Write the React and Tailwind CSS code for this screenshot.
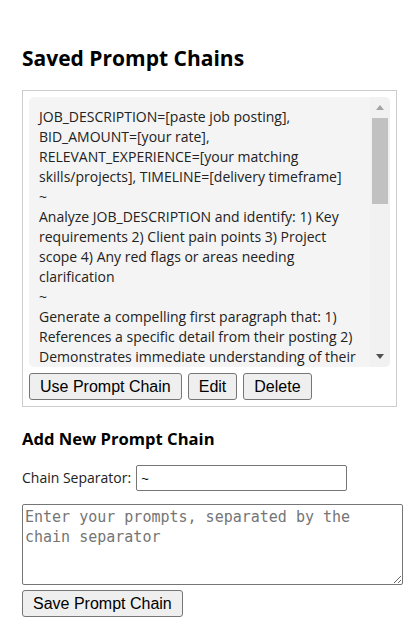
export default function App() {
  const text =
    "JOB_DESCRIPTION=[paste job posting], BID_AMOUNT=[your rate], RELEVANT_EXPERIENCE=[your matching skills/projects], TIMELINE=[delivery timeframe]\n~\nAnalyze JOB_DESCRIPTION and identify: 1) Key requirements 2) Client pain points 3) Project scope 4) Any red flags or areas needing clarification\n~\nGenerate a compelling first paragraph that: 1) References a specific detail from their posting 2) Demonstrates immediate understanding of their core problem 3) Positions you as the solution without being salesy\n~\nWrite a short section connecting RELEVANT_EXPERIENCE to the key requirements, with concrete results and numbers where possible\n~\nPropose a clear approach and TIMELINE, then state BID_AMOUNT with a brief justification of value\n~\nClose with a question that invites a reply and a friendly call to action";

  return (
    <div className="min-h-[641px] bg-white pl-[22px] pt-[43px] text-black">
      <h2 className="font-['Open_Sans',sans-serif] text-[21px] leading-[30px] font-bold text-black">
        Saved Prompt Chains
      </h2>

      <div className="mt-[17px] flex w-[375px] flex-col gap-[6px] border border-[#cccccc] p-[6px]">
        <div className="flex h-[270px] overflow-hidden rounded-[5px] bg-[#f4f4f4]">
          <div className="flex-1 overflow-hidden whitespace-pre-wrap py-[10px] pl-[10px] pr-[8px] font-['Open_Sans',sans-serif] text-[14px] leading-[20px] text-[#222222]">
            {text}
          </div>
          <div className="flex w-[20px] flex-col bg-[#f1f1f1]">
            <div className="flex h-[21px] items-center justify-center">
              <svg width="8" height="5" viewBox="0 0 8 5">
                <path d="M0 5 L4 0 L8 5 Z" fill="#a3a3a3" />
              </svg>
            </div>
            <div className="flex-1 px-[2px]">
              <div className="h-[86px] bg-[#c1c1c1]" />
            </div>
            <div className="flex h-[21px] items-center justify-center">
              <svg width="8" height="5" viewBox="0 0 8 5">
                <path d="M0 0 L4 5 L8 0 Z" fill="#505050" />
              </svg>
            </div>
          </div>
        </div>
        <div className="flex gap-[6px] font-['Liberation_Sans',Arial,sans-serif] text-[16px]">
          <button className="flex h-[27px] items-center rounded-[3px] border border-[#767676] bg-[#efefef] px-[10px] text-black">
            Use Prompt Chain
          </button>
          <button className="flex h-[27px] items-center rounded-[3px] border border-[#767676] bg-[#efefef] px-[10px] text-black">
            Edit
          </button>
          <button className="flex h-[27px] items-center rounded-[3px] border border-[#767676] bg-[#efefef] px-[10px] text-black">
            Delete
          </button>
        </div>
      </div>

      <h3 className="mt-[20px] font-['Open_Sans',sans-serif] text-[16.6px] leading-[24px] font-bold text-black">
        Add New Prompt Chain
      </h3>

      <div className="mt-[14px] flex items-center gap-[5px]">
        <label className="font-['Open_Sans',sans-serif] text-[14px] leading-[20px] text-[#222222]">
          Chain Separator:
        </label>
        <input
          type="text"
          defaultValue="~"
          className="h-[26px] w-[211px] rounded-[2px] border border-[#767676] bg-white px-[4px] font-['Liberation_Sans',Arial,sans-serif] text-[13px] text-black outline-none"
        />
      </div>

      <textarea
        placeholder="Enter your prompts, separated by the chain separator"
        className="mt-[13px] block h-[81px] w-[381px] resize rounded-[2px] border border-[#767676] bg-white px-[2px] py-[2px] font-['DejaVu_Sans_Mono',monospace] text-[15px] leading-[20px] text-black outline-none placeholder:text-[#757575]"
      />

      <button className="mt-[5px] flex h-[27px] items-center rounded-[3px] border border-[#767676] bg-[#efefef] px-[10px] font-['Liberation_Sans',Arial,sans-serif] text-[16px] text-black">
        Save Prompt Chain
      </button>
    </div>
  );
}
